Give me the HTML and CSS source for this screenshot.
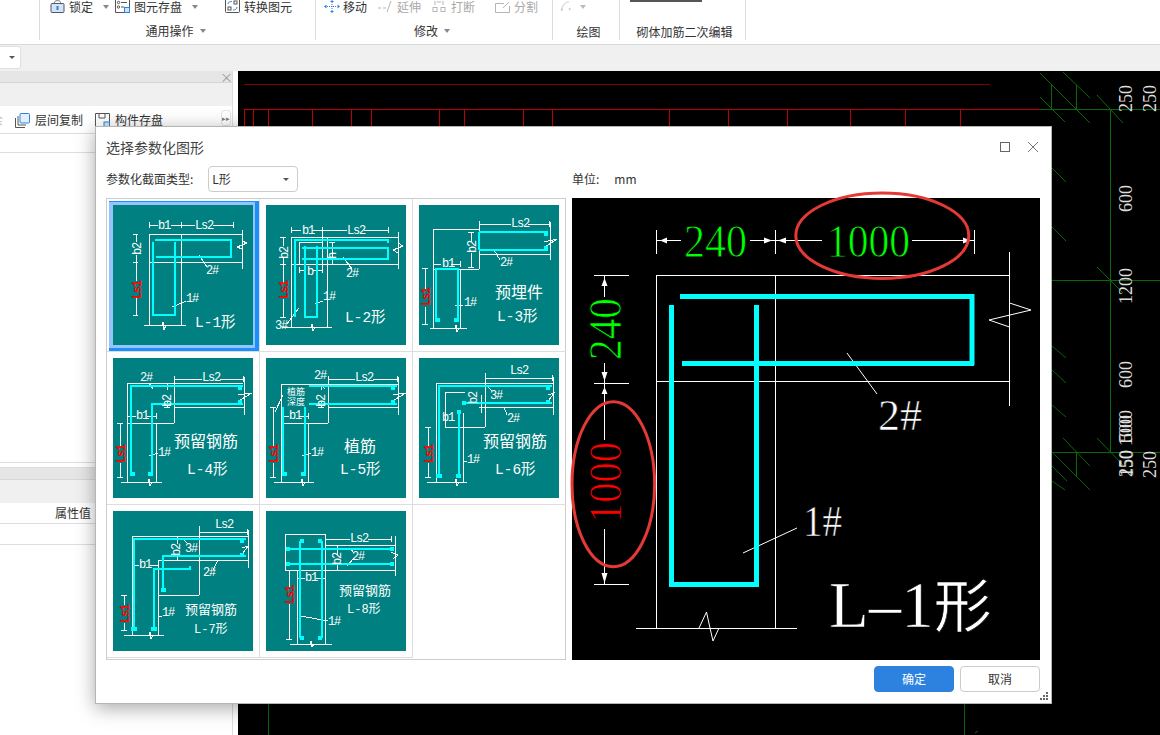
FILE: index.html
```html
<!DOCTYPE html>
<html lang="zh">
<head>
<meta charset="utf-8">
<title>选择参数化图形</title>
<link rel="stylesheet" href="styles.css">
</head>
<body>
<header class="ribbon">
  <section class="rgroup g1"></section>
  <section class="rgroup g2">
    <div class="rtools">
      <div class="tool w65"><svg class="ico" viewBox="0 0 14 13"><path class="lk-s" d="M4 4V2.5C4 0 10 0 10 2.5V4"/><rect class="lk-b" x="0.5" y="3.5" width="13" height="9" rx="1"/><path class="lk-k" d="M7 6V10"/></svg><span>锁定</span><i class="caret"></i></div>
      <div class="tool w110"><svg class="ico" viewBox="0 0 15 13"><path class="ln" d="M0.5 0V12.5H14.5V0"/><circle class="ln" cx="3.5" cy="2.5" r="1.2"/><circle class="ln" cx="3.5" cy="7" r="1.2"/><path class="ln" d="M6 2.5H12M6 7H9"/><rect class="sv" x="9.5" y="7.5" width="5" height="5"/></svg><span>图元存盘</span><i class="caret"></i></div>
      <div class="tool"><svg class="ico" viewBox="0 0 15 13"><rect class="ln" x="0.5" y="-2" width="14" height="14.5" rx="1"/><rect class="ln" x="3" y="7" width="3" height="3"/><rect class="ln" x="9" y="1" width="3" height="3"/><path class="bl" d="M3 4C3 2 5 1.500 7 1.500M12 7C12 9 10 10 8 10"/></svg><span>转换图元</span></div>
    </div>
    <div class="rlabel">通用操作<i class="caret"></i></div>
  </section>
  <section class="rgroup g3">
    <div class="rtools">
      <div class="tool w54 mv"><svg class="ico wide" viewBox="0 0 16 13"><path class="bl dot" d="M8 2V11M3 6.500H13"/><path class="bf" d="M8 0L10 2H6ZM8 13L10 11H6ZM0 6.500L2.500 4.500V8.500ZM16 6.500L13.500 4.500V8.500Z"/></svg><span>移动</span></div>
      <div class="tool off w54"><svg class="ico" viewBox="0 0 15 13"><path class="gl" d="M0 8H3M5 8H8M9 12L13 1"/></svg><span>延伸</span></div>
      <div class="tool off w63"><svg class="ico" viewBox="0 0 15 13"><rect class="gl" x="1" y="7.500" width="4" height="4"/><rect class="gl" x="9" y="7.500" width="4" height="4"/><path class="gl" d="M3 1V5M11 1V5M5 2H9"/></svg><span>打断</span></div>
      <div class="tool off"><svg class="ico" viewBox="0 0 15 13"><path class="gl" d="M0.500 3.500H9M14.500 6V12.500H0.500V3.500M8 8L14 2"/></svg><span>分割</span></div>
    </div>
    <div class="rlabel">修改<i class="caret"></i></div>
  </section>
  <section class="rgroup g4">
    <div class="rtools tools-draw"><svg class="arc" viewBox="0 0 25 13"><path class="gl" d="M1 11C2 4 7 0 11 0"/><circle class="gl" cx="1" cy="11" r="1"/><circle class="gl" cx="12" cy="10" r="1"/></svg><i class="caret light"></i></div>
    <div class="rlabel low nudge">绘图</div>
  </section>
  <section class="rgroup g5">
    <div class="rtools"><i class="clip"></i></div>
    <div class="rlabel low">砌体加筋二次编辑</div>
  </section>
</header>

<div class="subbar"><div class="subcombo"><i class="caret dark"></i></div></div>

<main class="main">
  <aside class="left">
    <div class="pane top">
      <div class="panehead"><span class="closex">×</span></div>
      <div class="panetabs"></div>
      <div class="panetools">
        <span class="cut">余</span>
        <div class="ptool"><svg class="ico" viewBox="0 0 15 15"><path class="ln" d="M0.500 5V14.500H10"/><path class="ln" d="M3 3V12H11"/><rect class="blf" x="5" y="0.500" width="9.500" height="9.500" rx="1"/></svg><span>层间复制</span></div>
        <div class="ptool"><svg class="ico" viewBox="0 0 15 15"><path class="ln" d="M0.500 14.500V0.500H14.500V14.500Z"/><path class="ln" d="M4 0.500V5H10V0.500"/><rect class="sv" x="9" y="9" width="5.500" height="5.500"/></svg><span>构件存盘</span></div>
        <span class="more">▸▸</span>
      </div>
      <div class="panerow"></div>
    </div>
    <div class="pane bottom">
      <div class="panehead"></div>
      <div class="panetabs"></div>
      <div class="proprow"><span>属性值</span></div>
      <div class="proprow"></div>
    </div>
  </aside>
  <div class="canvas">
    <svg class="cad" viewBox="238 71 922 664">
      <path class="rd" d="M244 84.500H990"/>
      <path class="rb" d="M244 109.500H1040M244.500 109V126M253.500 109V126M268.500 109V126M312.500 109V126M351.500 109V126M371.500 109V126M439.500 109V126M464.500 109V126M523.500 109V126M552.500 109V126M669.500 109V126M728.500 109V126M787.500 109V126M850.500 109V126M905.500 109V126M960.500 109V126"/>
      <path class="gr" d="M1040 109.500H1160M1052 280.500H1160M1052 452.500H1160M1110.500 109V452M1051.500 85V109M1076.500 85V109M1076.500 452V477M268.500 704V735M964.500 704V735"/>
      <path class="gd" d="M1040 97L1065 122M1040 73L1090 123M1063 72L1090 98M1097 95L1123 123M1052 168L1066 182M1052 227L1066 241M1097 267L1123 293M1052 346L1066 358M1052 370L1066 383M1052 405L1066 417M1063 438L1090 466M1097 438L1123 465M1052 452L1090 490M1052 466L1067 481M1052 481L1065 490M975 733L978 731"/>
      <g class="cadtxt">
        <text x="1132" y="112" transform="rotate(-90 1132 112)">250</text>
        <text x="1156" y="112" transform="rotate(-90 1156 112)">250</text>
        <text x="1132" y="212" transform="rotate(-90 1132 212)">600</text>
        <text x="1132" y="304" transform="rotate(-90 1132 304)">1200</text>
        <text x="1132" y="388" transform="rotate(-90 1132 388)">600</text>
        <text x="1132" y="446" transform="rotate(-90 1132 446)">1000</text>
        <text x="1132" y="442" transform="rotate(-90 1132 442)">500</text>
        <text x="1132" y="477" transform="rotate(-90 1132 477)">250</text>
        <text x="1133" y="477" transform="rotate(-90 1133 477)">150</text>
        <text x="1156" y="478" transform="rotate(-90 1156 478)">250</text>
      </g>
    </svg>
  </div>
</main>

<div class="dialog">
  <div class="dtitle"><span>选择参数化图形</span>
    <div class="winbtns"><i class="winmax"></i><svg class="winx" viewBox="0 0 12 12"><path d="M1 1L11 11M11 1L1 11"/></svg></div>
  </div>
  <div class="dhead">
    <div class="dleft-head"><span>参数化截面类型:</span><div class="combo"><span>L形</span><i class="caret dark"></i></div></div>
    <div class="dunit"><span>单位:</span><span class="mm">mm</span></div>
  </div>
  <div class="dbody">
    <div class="grid">
      <div class="cell sel"><svg class="thumb" viewBox="0 0 140 140">
        <path class="w" d="M36 20H45M58 20H82M100 20H120M36 17V23M68 17V23M120 17V23M36 29H129M36 57H129M36 29V120M68 29V120M31 120H73M129 25V64M129 36L134 38L124 42L129 44M49 120L50 117L51 125L53 120M23 29V37M23 50V76M23 93V110M20 29H25M20 57H25M20 110H25M86 50L94 62M59 102L73 96"/>
        <path class="c" d="M42 35H118V52H43M40 37V110H62V37"/>
        <text class="t" x="45" y="24">b1</text><text class="t" x="82" y="24">Ls2</text>
        <text class="t" x="28" y="50" transform="rotate(-90 28 50)">b2</text><text class="t r" x="28" y="94" transform="rotate(-90 28 94)">Ls1</text>
        <text class="t" x="93" y="69">2#</text><text class="t" x="73" y="97">1#</text><text class="n" x="82" y="122">L-1形</text>
      </svg></div>
      <div class="cell"><svg class="thumb" viewBox="0 0 140 140">
        <path class="w" d="M25 25H35M46 25H81M98 25H122M25 22V28M56 22V28M122 22V28M25 32H132M25 59H132M25 32V122M61 32V122M16 122H66M132 27V64M132 38L137 41L127 45L132 48M33 37H56M33 37V59M56 28V68M33 65H40M47 65H56M33 62V68M66 37V59M63 37H69M63 59H69M17 32V41M17 53V79M17 94V112M14 32H20M14 59H20M14 112H20M45 122L46 119L47 126L49 122M21 119L33 103M49 99L57 96M77 52L86 64"/>
        <path class="c" d="M29 112V35H122V38M36 43H122V54H36M39 41V112H51V41"/>
        <text class="t" x="36" y="29">b1</text><text class="t" x="81" y="29">Ls2</text><text class="t" x="41" y="70">b</text>
        <text class="t" x="22" y="54" transform="rotate(-90 22 54)">b2</text><text class="t" x="70" y="54" transform="rotate(-90 70 54)">h</text><text class="t r" x="22" y="94" transform="rotate(-90 22 94)">Ls1</text>
        <text class="t" x="9" y="124">3#</text><text class="t" x="57" y="95">1#</text><text class="t" x="80" y="72">2#</text><text class="n" x="79" y="117">L-2形</text>
      </svg></div>
      <div class="cell"><svg class="thumb" viewBox="0 0 140 140">
        <path class="w" d="M60 19H92M109 19H130M60 16V22M130 16V22M14 24H60M14 24V123M60 16V64M14 64H60M41 64V123M11 123H48M131 17V55M60 49H131M52 27V37M52 48V62M49 27H55M49 62H55M14 59H22M32 59H41M14 56V62M41 56V62M6 63V84M6 102V119M3 63H9M3 119H9M125 37L138 34L126 42M36 123L37 120L38 127L40 123M36 100H44M75 45L81 55"/>
        <path class="c" d="M60 27H129M60 45H129M60 27V45M17 117V64H39V117"/>
        <path class="h" d="M127 27V31M127 41V45M17 115H21M39 115H35"/>
        <text class="t" x="92" y="22">Ls2</text><text class="t" x="23" y="62">b1</text>
        <text class="t" x="57" y="48" transform="rotate(-90 57 48)">b2</text><text class="t r" x="11" y="101" transform="rotate(-90 11 101)">Ls1</text>
        <text class="t" x="45" y="101">1#</text><text class="t" x="81" y="61">2#</text>
        <text class="z" x="76" y="93">预埋件</text><text class="n" x="78" y="116">L-3形</text>
      </svg></div>
      <div class="cell"><svg class="thumb" viewBox="0 0 140 140">
        <path class="w" d="M61 21H89M107 21H130M61 18V24M130 18V24M14 25H130M14 25V124M61 18V65M14 65H61M43 65V124M8 124H49M61 49H131M131 19V57M54 25V32M54 44V49M51 49H57M14 58H23M34 58H43M14 55V61M43 55V61M7 65V88M7 105V119M4 65H10M4 119H10M35 124L36 121L37 128L39 124M36 98L45 95M36 25L40 31M125 37L139 35L127 42"/>
        <path class="c" d="M18 118V28H130M39 118V46H130"/>
        <path class="h" d="M18 116H22M39 116H35M127 28V32M127 42V46"/>
        <text class="t" x="89" y="23">Ls2</text><text class="t" x="27" y="23">2#</text><text class="t" x="23" y="61">b1</text>
        <text class="t" x="58" y="49" transform="rotate(-90 58 49)">b2</text><text class="t r" x="12" y="105" transform="rotate(-90 12 105)">Ls1</text>
        <text class="t" x="45" y="98">1#</text>
        <text class="z" x="61" y="89">预留钢筋</text><text class="n" x="74" y="116">L-4形</text>
      </svg></div>
      <div class="cell"><svg class="thumb" viewBox="0 0 140 140">
        <path class="w" d="M62 21H89M107 21H131M62 18V24M131 18V24M15 26H132M15 26V124M62 18V65M15 65H62M42 65V124M8 124H48M62 49H132M132 19V57M55 26V32M55 44V49M52 49H58M15 58H23M33 58H42M15 55V61M42 55V61M7 49V88M7 105V119M4 49H10M4 119H10M17 37L9 54M35 124L36 121L37 128L39 124M36 98L45 95M55 26L59 31M127 37L140 35L128 42"/>
        <path class="c" d="M43 28H131M43 46H131M17 49V118M39 49V118"/>
        <path class="h" d="M17 116H21M39 116H35M127 28V32M127 42V46"/>
        <text class="t" x="89" y="23">Ls2</text><text class="t" x="48" y="21">2#</text><text class="t" x="23" y="61">b1</text>
        <text class="t" x="59" y="49" transform="rotate(-90 59 49)">b2</text><text class="t r" x="12" y="105" transform="rotate(-90 12 105)">Ls1</text>
        <text class="t" x="45" y="98">1#</text>
        <text class="s" x="21" y="37">植筋</text><text class="s" x="21" y="47">深度</text>
        <text class="z" x="78" y="94">植筋</text><text class="n" x="74" y="116">L-5形</text>
      </svg></div>
      <div class="cell"><svg class="thumb" viewBox="0 0 140 140">
        <path class="w" d="M66 20H133M66 17V23M133 17V23M17 25H134M17 25V124M66 15V69M26 69H66M44 55V124M8 124H48M60 49H134M134 19V57M26 34H46M26 34V69M62 37V55M9 69V88M9 105V119M6 69H12M6 119H12M36 124L37 121L38 128L40 124M44 103H48M69 29L73 33M85 49L88 57M129 37L135 35L130 42"/>
        <path class="c" d="M20 118V28H133M40 52V118M45 45H133"/>
        <path class="h" d="M17 118H23M37 118H42M40 52V56M45 43V47M129 28V32M129 42V46"/>
        <text class="t" x="91" y="16">Ls2</text><text class="t" x="23" y="63">b1</text>
        <text class="t" x="58" y="46" transform="rotate(-90 58 46)">b2</text><text class="t r" x="14" y="105" transform="rotate(-90 14 105)">Ls1</text>
        <text class="t" x="71" y="41">3#</text><text class="t" x="88" y="64">2#</text><text class="t" x="48" y="105">1#</text>
        <text class="z" x="64" y="89">预留钢筋</text><text class="n" x="76" y="116">L-6形</text>
      </svg></div>
      <div class="cell"><svg class="thumb" viewBox="0 0 140 140">
        <path class="w" d="M86 21H134M86 18V24M134 18V24M19 25H135M19 25V124M86 15V84M45 84H86M45 50V124M11 124H51M45 49H135M135 19V57M19 54H26M37 54H45M64 25V33M64 45V49M11 84V94M11 112V119M8 84H14M8 119H14M36 124L37 121L38 128L40 124M45 105H49M71 29L75 33M105 49L100 59M129 37L135 35L130 42"/>
        <path class="c" d="M21 118V28H133M50 79V45H133M41 118V58H77V55"/>
        <path class="h" d="M18 118H24M38 118H44M48 79H53M129 28V32M129 42V46"/>
        <text class="t" x="102" y="17">Ls2</text><text class="t" x="26" y="57">b1</text>
        <text class="t" x="67" y="45" transform="rotate(-90 67 45)">b2</text><text class="t r" x="16" y="112" transform="rotate(-90 16 112)">Ls1</text>
        <text class="t" x="72" y="41">3#</text><text class="t" x="90" y="65">2#</text><text class="t" x="49" y="105">1#</text>
        <text class="zs" x="72" y="103">预留钢筋</text><text class="ns" x="81" y="122">L-7形</text>
      </svg></div>
      <div class="cell"><svg class="thumb" viewBox="0 0 140 140">
        <path class="w" d="M59 28H84M102 28H125M59 25V31M125 25V31M19 23H59V59H19ZM59 34H129M19 59H129M129 25V65M31 59V133M59 23V133M24 133H66M31 67H39M50 67H59M23 59V76M23 93V128M20 59H26M20 128H26M71 34V44M71 54V59M68 59H74M44 133L45 130L46 136L48 133M35 105L62 110M84 37L88 42M88 47L81 55M125 41L132 44L127 48"/>
        <path class="c" d="M22 38H126M22 53H126M34 30V127M56 30V127"/>
        <path class="h" d="M22 36V40M22 51V55M126 36V40M126 51V55M34 30H38M56 30H52M34 127H38M56 127H52"/>
        <text class="t" x="84" y="31">Ls2</text><text class="t" x="39" y="70">b1</text>
        <text class="t" x="75" y="54" transform="rotate(-90 75 54)">b2</text><text class="t r" x="28" y="93" transform="rotate(-90 28 93)">Ls1</text>
        <text class="t" x="86" y="49">2#</text><text class="t" x="62" y="114">1#</text>
        <text class="zs" x="73" y="84">预留钢筋</text><text class="ns" x="81" y="102">L-8形</text>
      </svg></div>
    </div>
    <svg class="preview" viewBox="572 198 468 462">
      <rect class="pv-bg" x="572" y="198" width="468" height="462"/>
      <path class="pv-l" d="M656.500 230V254M775.500 230V254M974.500 230V254M656.500 240.500H681M750 240.500H822M912 240.500H974.500M594 275.500H629M594 383.500H629M594 584.500H629M604.500 275.500V297M604.500 363V440M604.500 529V584M656.500 275.500H1009.500M656.500 381.500H1009.500M656.500 275V628M775.500 275V628M1009.500 252V406M636 628.500H797M699 628L706.500 612L710 628L713 641L719 628M1009.500 303L1031 310L989 320L1009.500 327M847 353L877 394M743 553L797 528"/>
      <path class="pv-a" d="M660 240.500L667 237.500V243.500ZM772 240.500L764 237.500V243.500ZM778 240.500L786 237.500V243.500ZM971 240.500L963 237.500V243.500ZM604.500 278L601.500 286H607.500ZM604.500 381L601.500 372H607.500ZM604.500 387L601.500 394H607.500ZM604.500 583L601.500 573H607.500Z"/>
      <path class="pv-c" d="M680 296.500H974.500M972 294V365M682 363.500H974M671.500 305V584.500H756.500V305"/>
      <text class="pv-g" x="684" y="257" textLength="63" lengthAdjust="spacingAndGlyphs">240</text>
      <text class="pv-g" x="827" y="257" textLength="83" lengthAdjust="spacingAndGlyphs">1000</text>
      <text class="pv-g" x="621" y="360" textLength="62" lengthAdjust="spacingAndGlyphs" transform="rotate(-90 621 360)">240</text>
      <text class="pv-r" x="621" y="523" textLength="81" lengthAdjust="spacingAndGlyphs" transform="rotate(-90 621 523)">1000</text>
      <text class="pv-t" x="878" y="430">2#</text>
      <text class="pv-t" x="803" y="536" textLength="39" lengthAdjust="spacingAndGlyphs">1#</text>
      <text class="pv-n" x="829" y="627">L–1<tspan class="pv-cjk">形</tspan></text>
      <ellipse class="pv-e" cx="882.300" cy="235.700" rx="86.500" ry="42.700"/>
      <ellipse class="pv-e" cx="613.300" cy="484.200" rx="41.300" ry="82.500"/>
    </svg>
  </div>
  <div class="dfoot"><button class="btn ok">确定</button><button class="btn">取消</button></div>
  <svg class="grip" viewBox="0 0 8 8"><path d="M6 0h2v2H6zM3 3h2v2H3zM6 3h2v2H6zM0 6h2v2H0zM3 6h2v2H3zM6 6h2v2H6z"/></svg>
</div>
</body>
</html>
```
FILE: styles.css
```css
* { box-sizing: border-box; }
html, body { margin: 0; height: 100%; }
body {
  width: 1160px; height: 735px; overflow: hidden; display: flex; flex-direction: column;
  background: #fff; color: #333; position: relative;
  font: 12px/14px "Noto Sans CJK SC", "Liberation Sans", sans-serif;
}
i { font-style: normal; display: block; }
.caret { width: 0; height: 0; border: 3.5px solid transparent; border-top: 4px solid #888; border-bottom: 0; margin-left: 6px; flex: none; }
.caret.dark { border-top-color: #555; border-width: 3px 3px 0; }
.caret.light { border-top-color: #bbb; margin: 0; }

.ribbon { height: 45px; flex: none; display: flex; border-bottom: 1px solid #d9d9d9; background: #fff; }
.rgroup { height: 40px; border-right: 1px solid #dcdcdc; display: flex; flex-direction: column; }
.g1 { width: 40px; }
.g2 { width: 276px; padding-left: 10px; }
.g3 { width: 237px; padding-left: 8px; }
.g4 { width: 67px; padding-left: 8px; }
.g5 { width: 126px; }
.rtools { height: 13px; margin-bottom: 11px; display: flex; align-items: center; }
.tool { display: flex; align-items: center; gap: 4px; white-space: nowrap; flex: none; line-height: 12px; }
.tool.mv { gap: 3px; }
.w65 { width: 65px; } .w110 { width: 110px; } .w54 { width: 54px; } .w63 { width: 63px; }
.off { color: #aaa; }
.ico { width: 15px; height: 13px; flex: none; overflow: hidden; }
.ico.wide { width: 16px; }
.rlabel { display: flex; align-items: center; justify-content: center; height: 14px; margin-left: -12px; }
.g2 .rlabel { margin-left: -14px; }
.g5 .rlabel { margin-left: 4px; }
.rlabel.low { margin-top: 1px; }
.nudge { padding-left: 9px; }
.tools-draw { gap: 1px; }
.arc { width: 18px; height: 13px; }
.clip { width: 72px; height: 2px; margin: 0 0 12px 10px; background: #555; }

.ln { fill: none; stroke: #555; }
.sv { fill: #cfe4fa; stroke: #2d82e0; }
.lk-s { fill: none; stroke: #667; }
.lk-b { fill: #d4e4f5; stroke: #556; }
.lk-k { stroke: #2d82e0; stroke-width: 2; }
.bl { fill: none; stroke: #2d82e0; }
.bf { fill: #2d82e0; }
.dot { stroke-dasharray: 1 1; }
.gl { fill: none; stroke: #b5b5b5; }
.blf { fill: #e3effc; stroke: #2d82e0; }

.subbar { height: 26px; flex: none; background: #f0f0f0; padding-top: 1px; }
.subcombo { width: 21px; height: 23px; background: #fff; border: 1px solid #e0e0e0; border-left: 0; border-radius: 0 3px 3px 0; display: flex; align-items: center; padding-left: 9px; }
.subcombo .caret { margin: 0; }

.main { flex: 1; display: flex; min-height: 0; }
.left { width: 238px; flex: none; padding-right: 5px; background: #fff; display: flex; flex-direction: column; }
.pane { border-right: 1px solid #ddd; }
.pane.top { height: 392px; flex: none; border-bottom: 1px solid #ddd; }
.pane.bottom { flex: 1; margin-top: 4px; border-top: 1px solid #ddd; }
.panehead { height: 12px; background: #e6e6e6; border-bottom: 1px solid #d6d6d6; display: flex; justify-content: flex-end; }
.closex { color: #999; font-size: 13px; line-height: 12px; margin-right: -1px; }
.panetabs { height: 23px; background: #f0f0f0; }
.panetools { height: 28px; background: #fff; border-bottom: 1px solid #ddd; display: flex; align-items: center; padding-top: 1px; position: relative; }
.cut { width: 15px; flex: none; margin-left: -9px; margin-right: 9px; color: #bbb; }
.ptool { display: flex; align-items: center; gap: 5px; width: 80px; flex: none; white-space: nowrap; }
.ptool .ico { height: 15px; }
.more { position: absolute; right: 1px; top: 4px; width: 10px; height: 16px; border: 1px solid #e4e4e4; border-radius: 3px; color: #777; font-size: 7px; line-height: 14px; text-align: center; overflow: hidden; }
.panerow { height: 19px; border-bottom: 1px solid #ddd; }
.proprow { height: 21px; border-bottom: 1px solid #ddd; padding: 3px 0 0 55px; }
.canvas { flex: 1; background: #000; position: relative; overflow: hidden; }
.cad { position: absolute; left: 0; top: 0; width: 922px; height: 664px; display: block; }
.rd { stroke: #7a0000; fill: none; }
.rb { stroke: #c40000; fill: none; shape-rendering: crispEdges; }
.gr { stroke: #0a6a0a; fill: none; shape-rendering: crispEdges; }
.gd { stroke: #0a6a0a; fill: none; }
.cadtxt text { fill: #ddd; font: 18px "Liberation Serif", serif; }

.dialog {
  position: absolute; left: 95px; top: 126px; width: 957px; height: 578px; background: #fff;
  border: 1px solid #b5b5b5; box-shadow: 0 4px 18px rgba(0,0,0,.35);
  padding: 0 11px 0 10px; display: flex; flex-direction: column;
}
.dtitle { height: 39px; flex: none; font-size: 14px; color: #444; display: flex; align-items: center; justify-content: space-between; }
.winbtns { display: flex; align-items: center; gap: 17px; margin-right: 1px; }
.winmax { width: 10px; height: 10px; border: 1px solid #666; }
.winx { width: 12px; height: 12px; stroke: #777; fill: none; }
.dhead { height: 32px; flex: none; display: flex; align-items: flex-start; }
.dleft-head { width: 466px; flex: none; display: flex; align-items: center; height: 26px; gap: 15px; }
.combo { width: 90px; height: 26px; border: 1px solid #ccc; border-radius: 4px; display: flex; align-items: center; justify-content: space-between; padding: 0 8px 0 3px; }
.dunit { height: 26px; display: flex; align-items: center; }
.mm { margin-left: 15px; }
.dbody { display: flex; gap: 6px; flex: none; height: 462px; }
.grid { width: 460px; height: 462px; flex: none; border: 1px solid #ccc; display: grid; grid-template-columns: repeat(3, 153px); grid-auto-rows: 153px; align-content: start; }
.cell { padding: 6px; border-right: 1px solid #ddd; border-bottom: 1px solid #ddd; }
.cell:nth-child(3n) { border-right: 0; }
.thumb { width: 140px; height: 140px; display: block; background: #008080; overflow: hidden; }
.sel .thumb { box-shadow: -1px 0 0 3px #93c4fb, 1px 1px 0 5px #1a90ff; }
.w { fill: none; stroke: #fff; stroke-width: 1; shape-rendering: crispEdges; }
.c { fill: none; stroke: #0ff; stroke-width: 2; shape-rendering: crispEdges; }
.h { fill: none; stroke: #0ff; stroke-width: 4; shape-rendering: crispEdges; }
.t { fill: #fff; font: 12px "Liberation Mono", monospace; letter-spacing: -1.200px; }
.t.r { fill: #f00; font-weight: bold; }
.n { fill: #fff; font: 14.500px "Liberation Mono", "Noto Sans CJK SC", monospace; }
.ns { fill: #fff; font: 12px "Liberation Mono", "Noto Sans CJK SC", monospace; }
.z { fill: #fff; font: 16px "Noto Sans CJK SC", sans-serif; }
.zs { fill: #fff; font: 13px "Noto Sans CJK SC", sans-serif; }
.s { fill: #fff; font: 9px "Noto Sans CJK SC", sans-serif; }
.preview { width: 468px; height: 462px; flex: none; display: block; overflow: visible; }
.pv-bg { fill: #000; }
.pv-l { fill: none; stroke: #fff; stroke-width: 1; }
.pv-a { fill: #fff; }
.pv-c { fill: none; stroke: #0ff; stroke-width: 5; }
.pv-g { fill: #0f0; font: 46px "Liberation Serif", serif; stroke: #000; stroke-width: 0.800; }
.pv-r { fill: #f00; font: 46px "Liberation Serif", serif; stroke: #000; stroke-width: 0.800; }
.pv-t { fill: #fff; font: 44px "Liberation Serif", serif; stroke: #000; stroke-width: 0.600; }
.pv-n { fill: #fff; font: 65px "Liberation Serif", "Noto Sans CJK SC", serif; stroke: #000; stroke-width: 0.600; }
.pv-cjk { font: 58px "Noto Sans CJK SC", sans-serif; }
.pv-e { fill: none; stroke: #e53935; stroke-width: 3; }
.dfoot { flex: 1; display: flex; justify-content: flex-end; gap: 6px; padding-top: 6px; }
.btn { width: 80px; height: 26px; border: 1px solid #ccc; border-radius: 4px; background: #fff; color: #333; font: inherit; padding: 0; }
.btn.ok { background: #2d82e0; border-color: #2d82e0; color: #fff; }
.grip { position: absolute; right: 3px; bottom: 3px; width: 8px; height: 8px; fill: #666; }
```
